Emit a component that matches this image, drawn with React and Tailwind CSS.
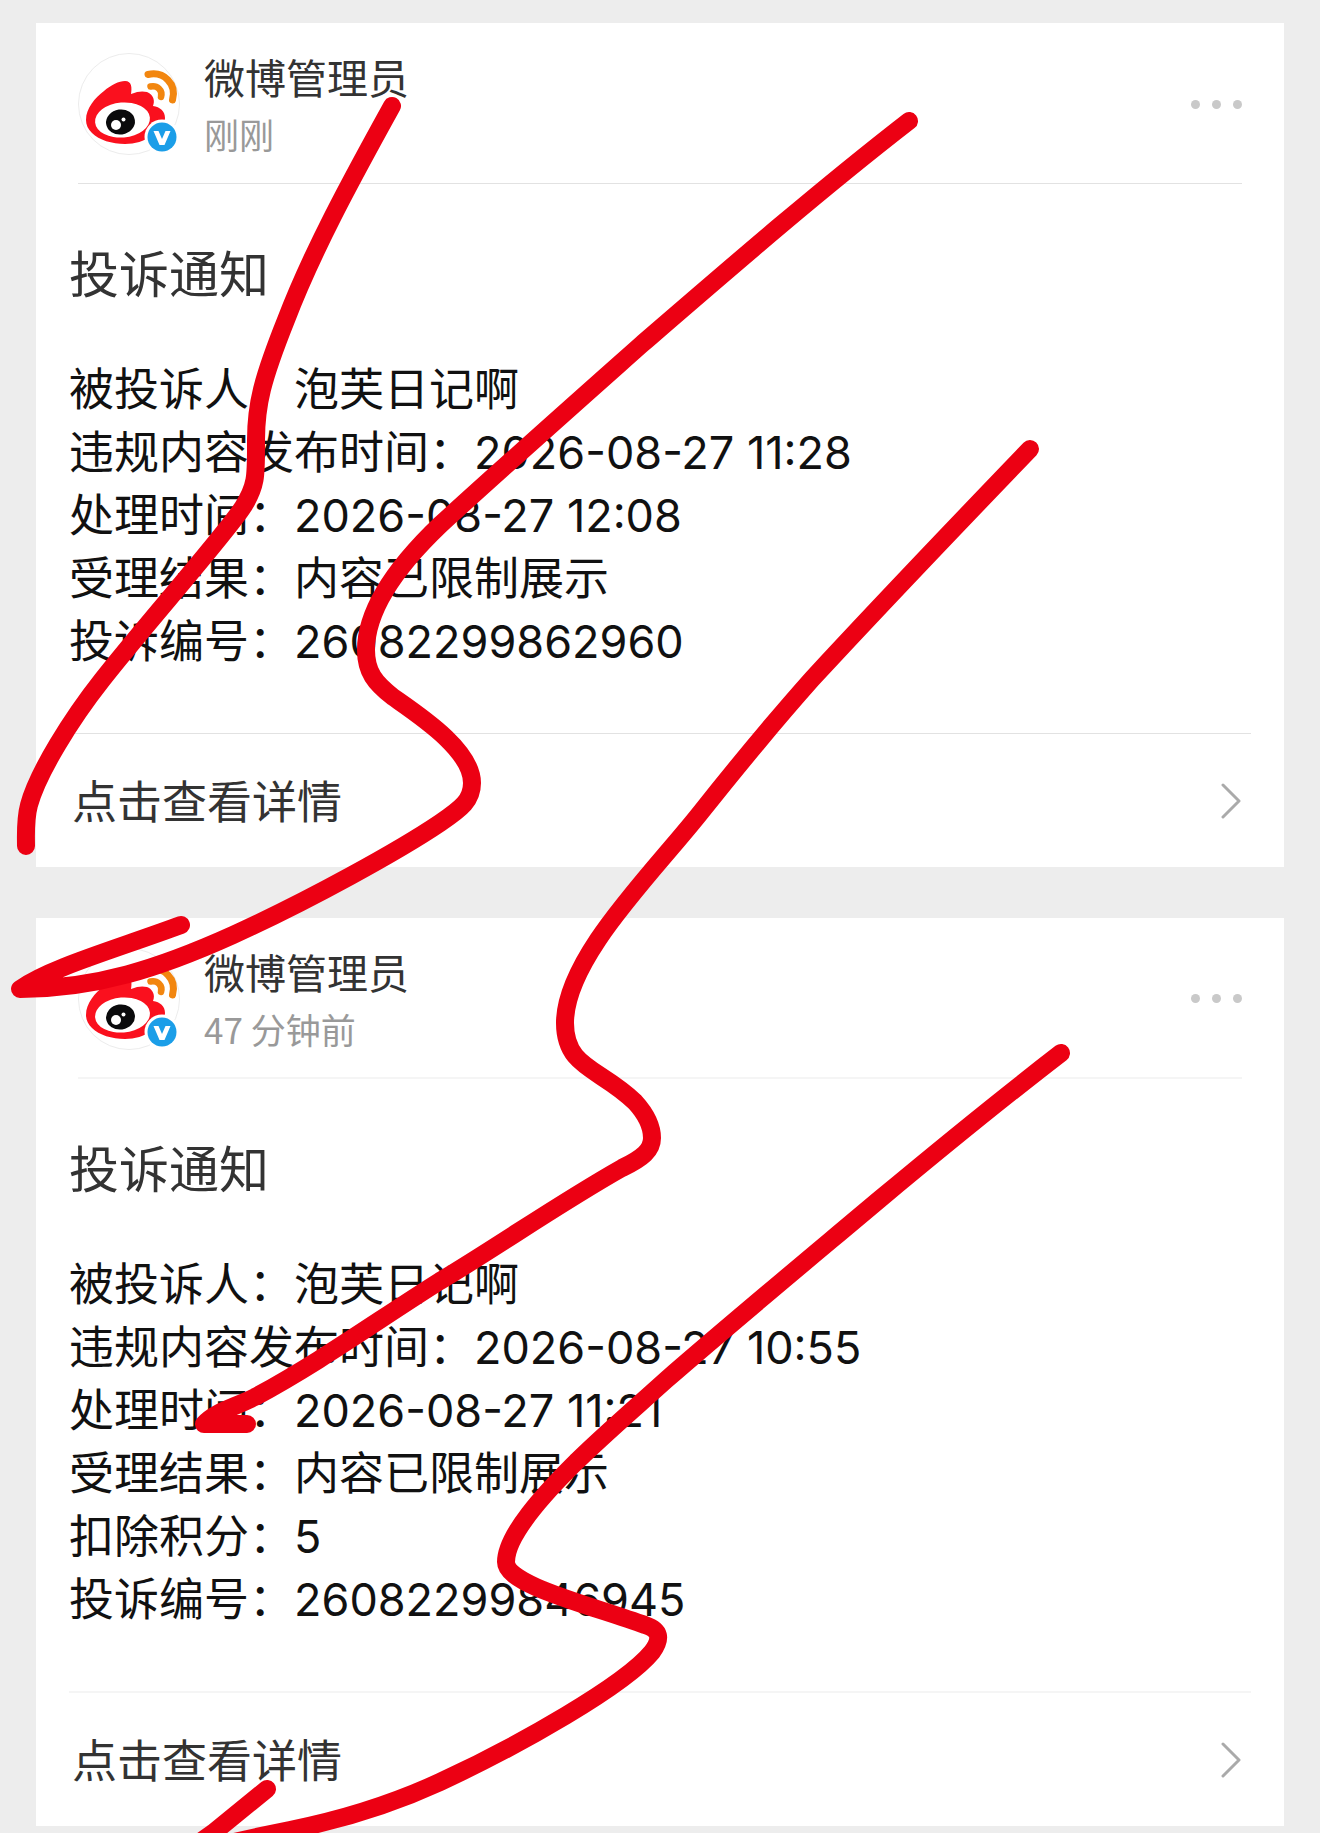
const NOTICES = [
    {
        id: "26082299862960",
        time: "刚刚",
        rule: "border-b border-[#e2e2e2]",
        rows: [
            ["被投诉人", "泡芙日记啊"],
            ["违规内容发布时间", "2026-08-27 11:28"],
            ["处理时间", "2026-08-27 12:08"],
            ["受理结果", "内容已限制展示"],
            ["投诉编号", "26082299862960"],
        ],
    },
    {
        id: "26082299846945",
        time: "47 分钟前",
        rule: "border-b-2 border-[#f5f5f5]",
        rows: [
            ["被投诉人", "泡芙日记啊"],
            ["违规内容发布时间", "2026-08-27 10:55"],
            ["处理时间", "2026-08-27 11:21"],
            ["受理结果", "内容已限制展示"],
            ["扣除积分", "5"],
            ["投诉编号", "26082299846945"],
        ],
    },
];

const STROKES = [
    "M392 106C350 182 312 252 286 320C262 380 256 405 256 440C256 475 257 485 243 507C225 535 145 625 102 680C72 718 38 772 29 805C25 820 26 835 26 846",
    "M909 121C820 190 730 268 642 344C570 408 500 470 440 525C395 568 366 610 366 650C366 672 375 683 393 697C420 716 472 750 472 783C472 800 462 808 440 823C400 850 310 900 233 935C160 968 95 989 20 989C50 968 110 951 181 925",
    "M1030 449C955 527 885 600 812 679C772 724 736 768 701 812C652 874 565 958 565 1023C565 1068 600 1068 635 1102C645 1113 652 1125 652 1138C652 1150 643 1158 622 1168C560 1203 500 1245 440 1281C375 1322 320 1362 255 1397C230 1409 215 1412 204 1424L247 1424",
    "M1061 1053C1000 1100 940 1149 880 1199C805 1262 735 1320 666 1380C635 1408 600 1438 573 1465C545 1493 506 1535 506 1562C506 1585 590 1605 645 1625C660 1630 662 1638 652 1652C625 1685 520 1745 440 1782C390 1805 340 1820 290 1830C250 1838 215 1846 180 1856L213 1833L267 1789",
];

function Avatar() {
    return (
        <svg viewBox="0 0 102 102" className="h-[102px] w-[102px] shrink-0" role="img" aria-label="微博管理员">
            <circle cx="51" cy="51" r="50.5" fill="#fff" stroke="#ececec" />
            <path d="M8 67C8 55 17 45 26 38C33 32 41 28 47 28C54 28 54 35 53 41C60 38 65 38 69 39C76 42 77 48 75 53C82 54 87 58 87 65C87 73 81 79 74 83C66 88 57 91 47 91C34 91 21 87 14 80C10 76 8 72 8 67Z" fill="#fa101e" />
            <ellipse cx="44.5" cy="67" rx="27.5" ry="17.5" fill="#fff" transform="rotate(-5 44.5 67)" />
            <ellipse cx="42.5" cy="69" rx="14.5" ry="12.5" fill="#0a0a0c" transform="rotate(-8 42.5 69)" />
            <circle cx="38" cy="72" r="5" fill="#fff" />
            <circle cx="45.5" cy="66.5" r="2" fill="#fff" />
            <path d="M70 21.5C86 18 99 31 94.5 47" fill="none" stroke="#f2860f" strokeWidth="7" strokeLinecap="round" />
            <path d="M72.5 33.5C79 32 85 37 83 44" fill="none" stroke="#f2860f" strokeWidth="6.5" strokeLinecap="round" />
            <circle cx="84" cy="84" r="17.5" fill="#fff" />
            <circle cx="84" cy="84" r="14.5" fill="#1b9ee8" />
            <path d="M75.5 78H80.5L84 86L87.5 78H92.5L86.5 92H81.5Z" fill="#fff" />
        </svg>
    );
}

function NoticeCard({ notice }) {
    return (
        <article className="bg-white">
            <header className={`mx-[42px] flex h-[161px] items-center pt-0.5 ${notice.rule}`}>
                <Avatar />
                <div className="ml-6 flex-1 pt-1">
                    <h2 className="text-[41px] leading-[56px] text-[#333]">微博管理员</h2>
                    <p className="font-['Noto_Sans_CJK_SC',sans-serif] text-[35px] leading-[54px] text-[#999]">{notice.time}</p>
                </div>
                <button type="button" aria-label="更多" className="flex gap-3 py-5">
                    <span className="size-[9px] rounded-full bg-[#c9c9c9]" />
                    <span className="size-[9px] rounded-full bg-[#c9c9c9]" />
                    <span className="size-[9px] rounded-full bg-[#c9c9c9]" />
                </button>
            </header>
            <div className={`mx-[33px] pt-[58px] pb-[60px] ${notice.rule}`}>
                <h3 className="text-[50px] leading-[66px] text-[#333]">投诉通知</h3>
                <dl className="mt-[50px] text-[45px] leading-[63px] text-[#111]">
                    {notice.rows.map(([label, value]) => (
                        <div key={label} className="flex">
                            <dt>{label}：</dt>
                            <dd>{value}</dd>
                        </div>
                    ))}
                </dl>
            </div>
            <a href="#detail" className="mx-[33px] flex h-[133px] items-center justify-between pr-2 pl-[3px] text-[45px] text-[#333]">
                <span className="pt-1">点击查看详情</span>
                <svg viewBox="0 0 22 36" className="h-9 w-[22px]" fill="none" stroke="#aaa" strokeWidth="3" strokeLinecap="round" strokeLinejoin="round">
                    <path d="M2 2L18 18L2 34" />
                </svg>
            </a>
        </article>
    );
}

function App() {
    return (
        <main className="relative overflow-hidden bg-[#ededed] px-9 pt-[23px] pb-[7px] font-[Inter,'Noto_Sans_CJK_SC',sans-serif]">
            <div className="flex flex-col gap-[51px]">
                {NOTICES.map((notice) => (
                    <NoticeCard key={notice.id} notice={notice} />
                ))}
            </div>
            <svg viewBox="0 0 1320 1833" className="pointer-events-none absolute top-0 left-0 w-full" fill="none" stroke="#ec0013" strokeWidth="18" strokeLinecap="round" strokeLinejoin="round" aria-hidden="true">
                {STROKES.map((d) => (
                    <path key={d} d={d} />
                ))}
            </svg>
        </main>
    );
}

export default App;
